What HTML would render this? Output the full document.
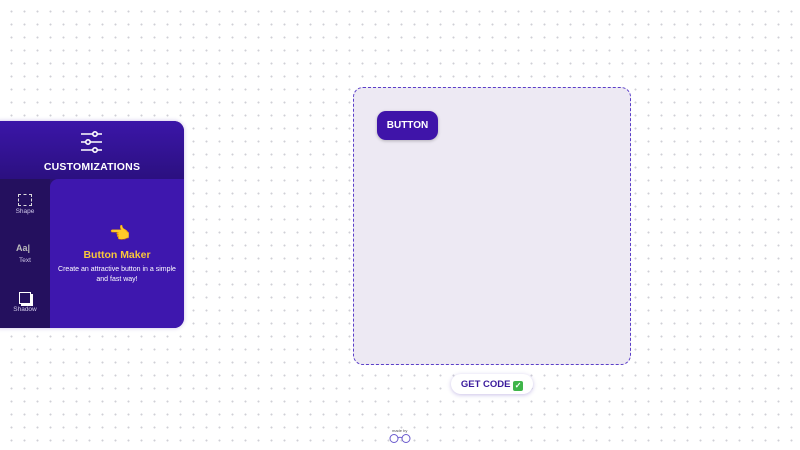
<!DOCTYPE html>
<html><head><meta charset="utf-8"><style>
html,body{margin:0;width:800px;height:450px;overflow:hidden;background:#fff;font-family:"Liberation Sans",sans-serif}
body{background-image:radial-gradient(circle,#cfcfd6 0.8px,transparent 1.2px);background-size:13px 13px;background-position:5px 5px;position:relative}
.panel{position:absolute;left:-10px;top:121px;width:194px;height:207px;border-radius:10px;background:#2a1070;overflow:hidden;box-shadow:0 0 4px rgba(80,40,180,.3)}
.head{position:absolute;left:0;top:0;width:194px;height:58px;background:linear-gradient(#3b16a8,#2b1080)}
.head .t{position:absolute;left:10px;width:184px;top:40px;text-align:center;color:#fff;font-weight:bold;font-size:10.5px;letter-spacing:.2px}
.side{position:absolute;left:0;top:58px;width:60px;height:149px;background:#24105e}
.content{position:absolute;left:60px;top:58px;width:134px;height:149px;background:#3e17ae;border-top-left-radius:8px}
.lbl{position:absolute;left:10px;width:50px;text-align:center;color:#cfc8e8;font-size:6.5px}
.card{position:absolute;left:353px;top:87px;width:276px;height:276px;border:1.5px dashed #5b3fc9;border-radius:10px;background:#ede9f3}
.btn{position:absolute;left:377px;top:111px;width:61px;height:29px;border-radius:9px;background:#3f14a9;color:#fff;font-weight:bold;font-size:10px;line-height:30px;text-align:center;box-shadow:0 1px 3px rgba(0,0,0,.25)}
.get{position:absolute;left:451px;top:374px;width:82px;height:20px;border-radius:10px;background:#fff;box-shadow:0 1px 4px rgba(80,50,180,.3);color:#3a1a9c;font-weight:bold;font-size:9.5px;line-height:21px;text-align:center}
.chk{display:inline-block;width:10px;height:10px;background:#3fb54a;border-radius:2px;vertical-align:-1px;color:#fff;font-size:8px;line-height:10px}
</style></head><body>
<div class="panel">
 <div class="head">
  <svg style="position:absolute;left:90px;top:9px" width="24" height="24" viewBox="0 0 24 24" stroke="#fff" stroke-width="1.6" fill="none"><line x1="1" y1="4" x2="22" y2="4"/><circle cx="15" cy="4" r="2.2" fill="#3b16a8"/><line x1="1" y1="12" x2="22" y2="12"/><circle cx="8" cy="12" r="2.2" fill="#35139a"/><line x1="1" y1="20" x2="22" y2="20"/><circle cx="15" cy="20" r="2.2" fill="#2e1188"/></svg>
  <div class="t">CUSTOMIZATIONS</div>
 </div>
 <div class="side">
  <div style="position:absolute;left:28px;top:15px;width:12px;height:10px;border:1px dashed #ddd"></div>
  <div class="lbl" style="top:29px">Shape</div>
  <div style="position:absolute;left:26px;top:64px;color:#bbb;font-size:9px;font-weight:bold">Aa|</div>
  <div class="lbl" style="top:78px">Text</div>
  <div style="position:absolute;left:29px;top:113px;width:10px;height:10px;border:1.5px solid #fff;box-shadow:2px 2px 0 #fff"></div>
  <div class="lbl" style="top:127px">Shadow</div>
 </div>
 <div class="content">
  <div style="position:absolute;left:3px;width:134px;top:45px;text-align:center;font-size:17px">👈</div>
  <div style="position:absolute;left:0;width:134px;top:70px;text-align:center;color:#f9c63a;font-weight:bold;font-size:10.5px">Button Maker</div>
  <div style="position:absolute;left:6px;width:122px;top:86px;text-align:center;color:#fff;font-size:7px;line-height:10px">Create an attractive button in a simple and fast way!</div>
 </div>
</div>
<div class="card"></div>
<div class="btn">BUTTON</div>
<div class="get">GET CODE <span class="chk">✓</span></div>
<div style="position:absolute;left:392px;top:428px;font-size:4px;color:#555">made by</div>
<svg style="position:absolute;left:388px;top:433px" width="24" height="10" viewBox="0 0 24 10" fill="none" stroke="#6a5acd" stroke-width="1"><circle cx="6" cy="5.5" r="4"/><circle cx="18" cy="5.5" r="4"/><path d="M10 5 Q12 3.5 14 5"/></svg>
</body></html>
